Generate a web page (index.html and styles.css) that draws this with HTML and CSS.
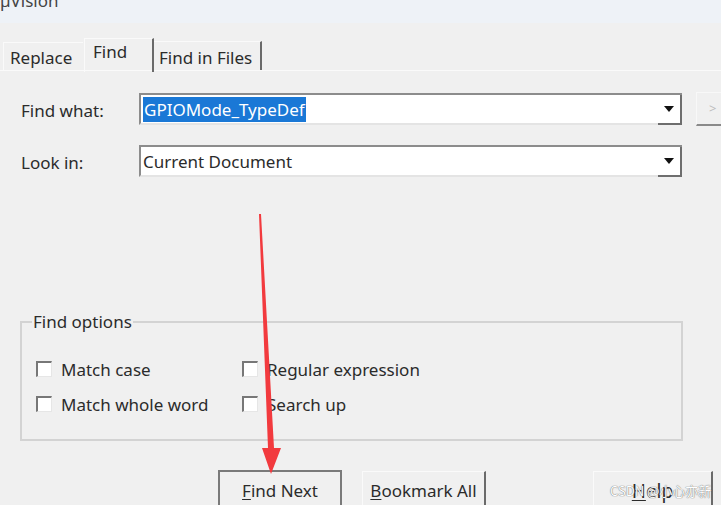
FILE: index.html
```html
<!DOCTYPE html>
<html lang="en">
<head>
  <meta charset="UTF-8" />
  <title>µVision - Find</title>
  <link rel="stylesheet" href="styles.css">
</head>
<body>
  <div class="titlebar"><span class="title">µVision</span></div>

  <div class="tabs">
    <div class="tab tab-replace">Replace</div>
    <div class="tab tab-find active">Find</div>
    <div class="tab tab-files">Find in Files</div>
  </div>

  <div class="panel">
    <div class="row">
      <label class="lbl">Find what:</label>
      <div class="combo">
        <div class="combo-text"><span class="sel">GPIOMode_TypeDef</span></div>
        <div class="combo-btn"><span class="arrow"></span></div>
      </div>
      <div class="side-btn">&gt;</div>
    </div>
    <div class="row row2">
      <label class="lbl">Look in:</label>
      <div class="combo">
        <div class="combo-text">Current Document</div>
        <div class="combo-btn"><span class="arrow"></span></div>
      </div>
    </div>

    <fieldset class="group">
      <legend>Find options</legend>
      <div class="opts">
        <div class="opt"><span class="box"></span>Match case</div>
        <div class="opt"><span class="box"></span>Regular expression</div>
        <div class="opt"><span class="box"></span>Match whole word</div>
        <div class="opt"><span class="box"></span>Search up</div>
      </div>
    </fieldset>

    <div class="buttons">
      <div class="btn btn-default"><u>F</u>ind Next</div>
      <div class="btn btn-bookmark"><u>B</u>ookmark All</div>
      <div class="btn btn-help"><u>H</u>elp</div>
    </div>
  </div>

  <!-- annotation arrow drawn over the dialog -->
  <svg class="red-arrow" width="721" height="505" viewBox="0 0 721 505">
    <polygon points="259,214 261,214 274,448 281,448 271,474 262,448 268,448" fill="#f23a3e"/>
  </svg>

  <div class="watermark">CSDN @小心亦新</div>
</body>
</html>
```

FILE: styles.css
```css
body {
  margin: 0;
  width: 721px;
  height: 505px;
  overflow: hidden;
  background: #f0f0f0;
  font-family: "Noto Sans", "Open Sans", sans-serif;
  font-size: 17px;
  color: #2b2b2b;
  position: relative;
}
.titlebar {
  height: 23px;
  background: #eef2f7;
  overflow: hidden;
}
.title {
  display: block;
  margin-top: -7px;
  line-height: 16px;
  color: #444;
}
.tabs {
  display: flex;
  align-items: flex-end;
  height: 47px;
  padding-left: 3px;
  border-bottom: 1px solid #fafafa;
}
.tab {
  box-sizing: border-box;
  padding: 0 6px;
  line-height: 26px;
}
.tab-replace {
  height: 28px;
  width: 80px;
  border-top: 1px solid #fafafa;
  border-left: 1px solid #fafafa;
  padding-top: 2px;
}
.tab-find {
  height: 34px;
  width: 70px;
  margin-left: 1px;
  padding-left: 8px;
  border-top: 1px solid #fafafa;
  border-left: 1px solid #fafafa;
  border-right: 2px solid #6a6a6a;
  margin-bottom: -2px;
}
.tab-files {
  height: 29px;
  width: 108px;
  padding-left: 5px;
  border-top: 1px solid #fafafa;
  border-right: 2px solid #6a6a6a;
  padding-top: 3px;
}
.panel {
  padding: 22px 0 0 21px;
}
.row {
  display: flex;
  align-items: center;
  height: 32px;
}
.row2 {
  margin-top: 20px;
}
.lbl {
  width: 118px;
  flex-shrink: 0;
  padding-top: 3px;
}
.combo {
  box-sizing: border-box;
  display: flex;
  flex-shrink: 0;
  width: 543px;
  height: 32px;
  border: 2px solid #8c8c8c;
  border-bottom-color: #e4e4e4;
  background: #fff;
}
.combo-text {
  flex: 1;
  padding: 2px 0 0 2px;
  line-height: 25px;
}
.sel {
  display: inline-block;
  background: #1a78d6;
  color: #fff;
  padding: 0 1px;
  height: 25px;
}
.combo-btn {
  box-sizing: border-box;
  width: 24px;
  height: 30px;
  border-right: 2px solid #6e6e6e;
  border-bottom: 2px solid #6e6e6e;
  margin-right: -2px;
  display: flex;
  align-items: center;
  justify-content: center;
}
.arrow {
  width: 0;
  height: 0;
  border-left: 5px solid transparent;
  border-right: 5px solid transparent;
  border-top: 6px solid #111;
}
.side-btn {
  box-sizing: border-box;
  flex-shrink: 0;
  margin-left: 14px;
  width: 40px;
  height: 34px;
  border-top: 1px solid #f8f8f8;
  border-left: 1px solid #f8f8f8;
  border-bottom: 2px solid #8a8a8a;
  color: #bdbdbd;
  font-size: 13px;
  padding-left: 12px;
  line-height: 30px;
}
.group {
  box-sizing: border-box;
  width: 663px;
  height: 129px;
  margin: 135px 0 0 -1px;
  padding: 26px 0 0 14px;
  border: 2px solid #d3d3d3;
}
.group legend {
  padding: 0 1px;
  margin-left: -4px;
  line-height: 20px;
}
.opts {
  display: grid;
  grid-template-columns: 206px 1fr;
  row-gap: 13px;
}
.opt {
  display: flex;
  align-items: center;
  height: 22px;
}
.box {
  box-sizing: border-box;
  width: 16px;
  height: 16px;
  margin-right: 9px;
  background: #fff;
  border-top: 2px solid #777;
  border-left: 2px solid #777;
  border-right: 1px solid #e6e6e6;
  border-bottom: 1px solid #e6e6e6;
}
.buttons {
  display: flex;
  margin-top: 29px;
  padding-left: 197px;
}
.btn {
  box-sizing: border-box;
  height: 40px;
  padding-top: 5px;
  text-align: center;
  line-height: 28px;
}
.btn u {
  text-decoration-thickness: 1px;
  text-underline-offset: 2px;
}
.btn-default {
  width: 124px;
  border: 2px solid #7a7a7a;
  border-bottom: none;
}
.btn-bookmark {
  width: 124px;
  margin-left: 20px;
  margin-top: 1px;
  border-top: 1px solid #fafafa;
  border-left: 1px solid #fafafa;
  border-right: 2px solid #6a6a6a;
}
.btn-help {
  width: 120px;
  margin-left: 107px;
  margin-top: 1px;
  border-top: 1px solid #fafafa;
  border-left: 1px solid #fafafa;
  border-right: 2px solid #6a6a6a;
  font-size: 19px;
}
.red-arrow {
  position: absolute;
  left: 0;
  top: 0;
  pointer-events: none;
}
.watermark {
  position: absolute;
  left: 610px;
  top: 481px;
  font-family: "Noto Sans CJK SC", "Noto Sans", sans-serif;
  font-size: 13px;
  color: #fff;
  text-shadow: 0 0 1px #777, 0 0 1px #777;
}
```
